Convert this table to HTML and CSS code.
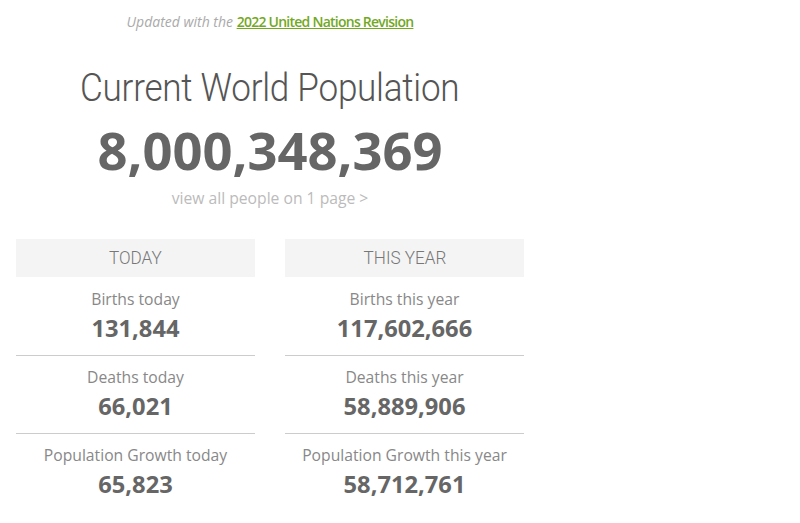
FILE: index.html
```html
<!DOCTYPE html>
<html>
<head>
<meta charset="utf-8">
<link rel="stylesheet" href="styles.css">
</head>
<body>
<div class="wrap">
  <p class="updated">Updated with the <a href="#">2022 United Nations Revision</a></p>
  <h1 class="title"><span class="cond">Current World Population</span></h1>
  <div class="big">8,000,348,369</div>
  <a class="viewall" href="#">view all people on 1 page &gt;</a>
  <div class="cols">
    <div class="col">
      <div class="colhead"><span class="cond">TODAY</span></div>
      <div class="stat"><div class="label">Births today</div><div class="num">131,844</div></div>
      <div class="stat"><div class="label">Deaths today</div><div class="num">66,021</div></div>
      <div class="stat last"><div class="label">Population Growth today</div><div class="num">65,823</div></div>
    </div>
    <div class="col">
      <div class="colhead"><span class="cond">THIS YEAR</span></div>
      <div class="stat"><div class="label">Births this year</div><div class="num">117,602,666</div></div>
      <div class="stat"><div class="label">Deaths this year</div><div class="num">58,889,906</div></div>
      <div class="stat last"><div class="label">Population Growth this year</div><div class="num">58,712,761</div></div>
    </div>
  </div>
</div>
</body>
</html>
```
FILE: styles.css
```css
html, body { margin: 0; padding: 0; background: #fff; }
body { font-family: "Open Sans", "Liberation Sans", sans-serif; color: #666; }
.wrap { width: 508px; margin-left: 16px; display: flex; flex-direction: column; align-items: center; }
.updated { margin: 12px 0 0; font-size: 14px; line-height: 20px; font-style: italic; color: #aaa; white-space: nowrap; }
.updated a { color: #72a823; font-style: normal; font-weight: 600; letter-spacing: -0.75px; text-decoration: underline; }
.cond { display: inline-block; transform: scaleX(0.9); }
.title { margin: 31px 0 0; font-family: Roboto, sans-serif; font-weight: 300; font-size: 39px; line-height: 50px; color: #555; letter-spacing: -0.3px; white-space: nowrap; }
.big { margin-top: 7px; font-weight: 700; font-size: 52.5px; line-height: 60px; color: #666; }
.viewall { margin-top: 7px; font-size: 15.7px; line-height: 22px; color: #bbb; text-decoration: none; }
.cols { margin-top: 30px; align-self: stretch; display: grid; grid-template-columns: 1fr 1fr; column-gap: 30px; }
.col { display: flex; flex-direction: column; }
.colhead { background: #f4f4f4; height: 38px; line-height: 38px; text-align: center; font-family: Roboto, sans-serif; font-weight: 300; font-size: 19px; color: #777; }
.stat { text-align: center; padding: 10px 0 9px; border-bottom: 1px solid #ccc; }
.colhead + .stat { padding-top: 10.5px; padding-bottom: 9.5px; }
.stat.last { border-bottom: none; }
.label { font-size: 15.7px; line-height: 22px; color: #888; }
.num { font-weight: 700; font-size: 23.7px; line-height: 36px; color: #666; }
```
